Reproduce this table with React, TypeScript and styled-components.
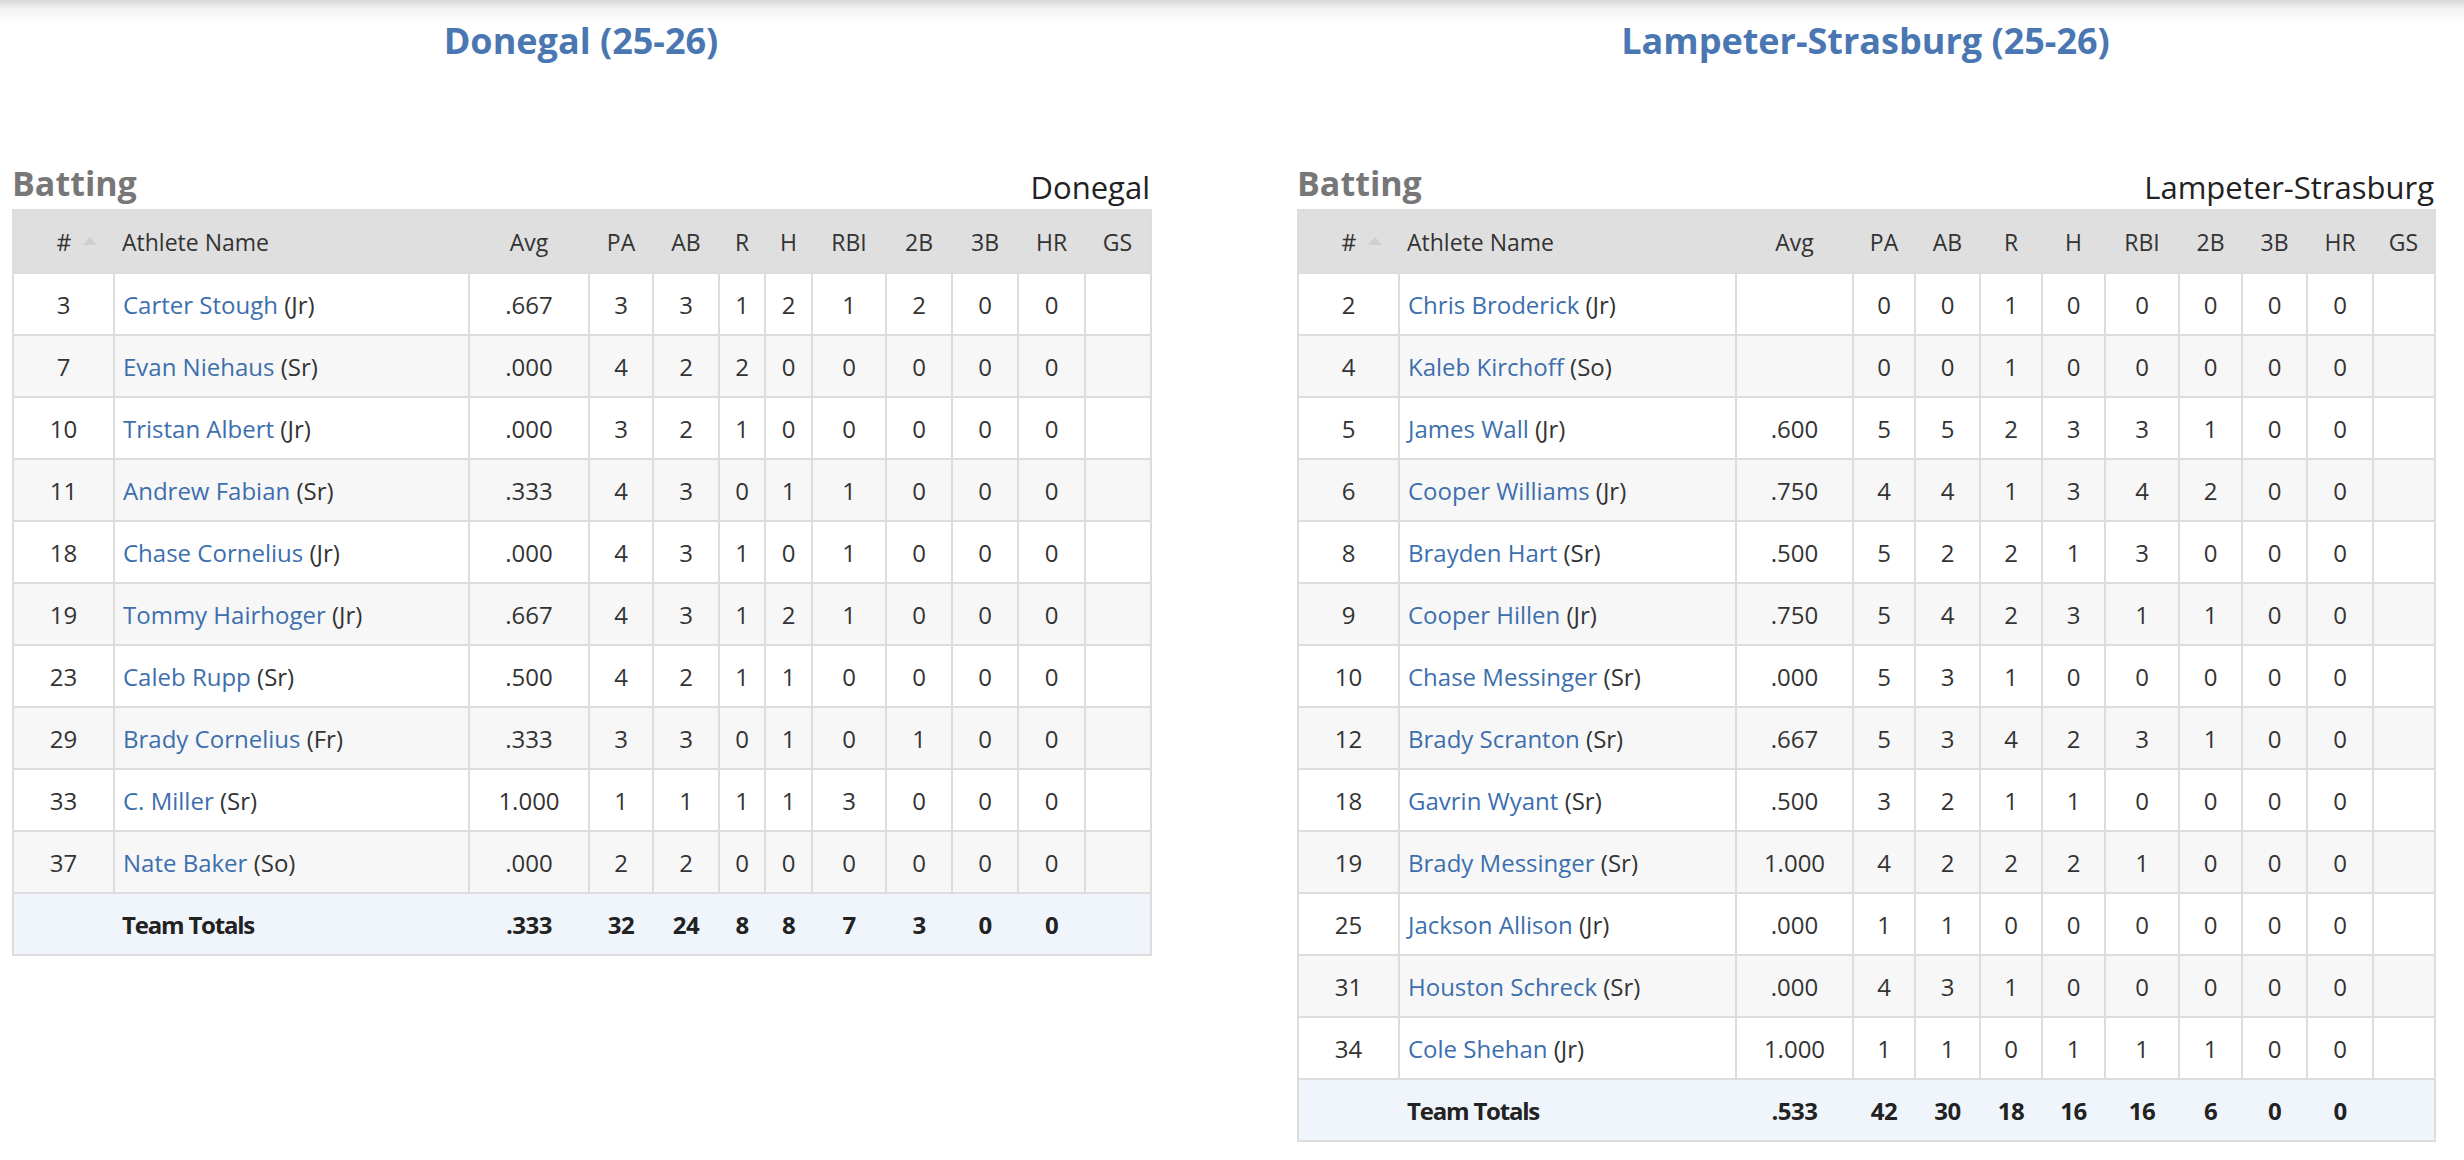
import styled, { createGlobalStyle } from "styled-components";

// Global
const GlobalStyle = createGlobalStyle`
  body {
    margin: 0;
    font-family: "Open Sans", "Noto Sans", sans-serif;
    color: #333;
    background: linear-gradient(to bottom, #d8d8d8 0, #f3f3f3 9px, #ffffff 24px) no-repeat #ffffff;
  }
`;

type Row = {
  num: string;
  name: string;
  cls: string;
  stats: string[];
};

type Team = {
  title: string;
  label: string;
  widths: number[];
  rows: Row[];
  totals: string[];
};

const headers = ["Avg", "PA", "AB", "R", "H", "RBI", "2B", "3B", "HR", "GS"];

const r = (num: string, name: string, cls: string, line: string): Row => ({
  num,
  name,
  cls,
  stats: line.split(",").concat(""),
});

const teams: Team[] = [
  {
    title: "Donegal (25-26)",
    label: "Donegal",
    widths: [101, 355, 120, 64, 66, 46, 47, 74, 66, 66, 67, 66],
    rows: [
      r("3", "Carter Stough", "Jr", ".667,3,3,1,2,1,2,0,0"),
      r("7", "Evan Niehaus", "Sr", ".000,4,2,2,0,0,0,0,0"),
      r("10", "Tristan Albert", "Jr", ".000,3,2,1,0,0,0,0,0"),
      r("11", "Andrew Fabian", "Sr", ".333,4,3,0,1,1,0,0,0"),
      r("18", "Chase Cornelius", "Jr", ".000,4,3,1,0,1,0,0,0"),
      r("19", "Tommy Hairhoger", "Jr", ".667,4,3,1,2,1,0,0,0"),
      r("23", "Caleb Rupp", "Sr", ".500,4,2,1,1,0,0,0,0"),
      r("29", "Brady Cornelius", "Fr", ".333,3,3,0,1,0,1,0,0"),
      r("33", "C. Miller", "Sr", "1.000,1,1,1,1,3,0,0,0"),
      r("37", "Nate Baker", "So", ".000,2,2,0,0,0,0,0,0"),
    ],
    totals: [".333", "32", "24", "8", "8", "7", "3", "0", "0", ""],
  },
  {
    title: "Lampeter-Strasburg (25-26)",
    label: "Lampeter-Strasburg",
    widths: [101, 337, 117, 62, 65, 62, 63, 74, 63, 65, 66, 62],
    rows: [
      r("2", "Chris Broderick", "Jr", ",0,0,1,0,0,0,0,0"),
      r("4", "Kaleb Kirchoff", "So", ",0,0,1,0,0,0,0,0"),
      r("5", "James Wall", "Jr", ".600,5,5,2,3,3,1,0,0"),
      r("6", "Cooper Williams", "Jr", ".750,4,4,1,3,4,2,0,0"),
      r("8", "Brayden Hart", "Sr", ".500,5,2,2,1,3,0,0,0"),
      r("9", "Cooper Hillen", "Jr", ".750,5,4,2,3,1,1,0,0"),
      r("10", "Chase Messinger", "Sr", ".000,5,3,1,0,0,0,0,0"),
      r("12", "Brady Scranton", "Sr", ".667,5,3,4,2,3,1,0,0"),
      r("18", "Gavrin Wyant", "Sr", ".500,3,2,1,1,0,0,0,0"),
      r("19", "Brady Messinger", "Sr", "1.000,4,2,2,2,1,0,0,0"),
      r("25", "Jackson Allison", "Jr", ".000,1,1,0,0,0,0,0,0"),
      r("31", "Houston Schreck", "Sr", ".000,4,3,1,0,0,0,0,0"),
      r("34", "Cole Shehan", "Jr", "1.000,1,1,0,1,1,1,0,0"),
    ],
    totals: [".533", "42", "30", "18", "16", "16", "6", "0", "0", ""],
  },
];

// Styled Components
const Page = styled.main`
  display: grid;
  grid-template-columns: 1138px 1137px;
  column-gap: 147px;
  padding-left: 12px;
  padding-bottom: 40px;
`;

const TeamSection = styled.section`
  display: flex;
  flex-direction: column;
`;

const TeamTitle = styled.h2`
  margin: 17px 0 0;
  height: 48px;
  line-height: 48px;
  text-align: center;
  font-size: 36px;
  font-weight: 700;
  color: #4a77b2;
`;

const HeadingRow = styled.div`
  display: flex;
  justify-content: space-between;
  align-items: flex-end;
  margin-top: 100px;
`;

const SectionName = styled.h3`
  margin: 0 0 8px;
  font-size: 34px;
  line-height: 36px;
  font-weight: 700;
  color: #777;
`;

const TeamLabel = styled.span`
  margin-bottom: 6px;
  font-size: 31px;
  line-height: 32px;
  color: #222;
`;

const Table = styled.table`
  width: 100%;
  table-layout: fixed;
  border-collapse: collapse;
  border: 2px solid #dddddd;
  font-size: 24px;
`;

const Col = styled.col<{ $w: number }>`
  width: ${(p) => p.$w}px;
`;

const HeadCell = styled.th<{ $left?: boolean; $sort?: boolean }>`
  position: relative;
  height: 61px;
  padding: 0 ${(p) => (p.$left ? "8px" : "0")};
  background: #dfdfdf;
  color: #333;
  font-size: 23px;
  font-weight: 400;
  text-align: ${(p) => (p.$left ? "left" : "center")};
  white-space: nowrap;

  ${(p) =>
    p.$sort &&
    `
    &::after {
      content: "";
      position: absolute;
      left: 69px;
      top: 26px;
      border-left: 7px solid transparent;
      border-right: 7px solid transparent;
      border-bottom: 8px solid #cfcfcf;
    }
  `}
`;

const BodyRow = styled.tr`
  background: #ffffff;
  &:nth-child(even) {
    background: #f7f7f7;
  }
`;

const Cell = styled.td<{ $left?: boolean }>`
  height: 60px;
  padding: 0 ${(p) => (p.$left ? "8px" : "0")};
  border: 2px solid #dddddd;
  text-align: ${(p) => (p.$left ? "left" : "center")};
  white-space: nowrap;
  color: #333;
`;

const PlayerLink = styled.a`
  color: #3d6fae;
  text-decoration: none;
`;

const TotalsRow = styled.tr`
  background: #f0f5fc;
  border-top: 2px solid #dddddd;
`;

const TotalCell = styled.td<{ $label?: boolean }>`
  height: 60px;
  padding: 0 ${(p) => (p.$label ? "8px" : "0")};
  text-align: ${(p) => (p.$label ? "left" : "center")};
  letter-spacing: ${(p) => (p.$label ? "-1.2px" : "-0.5px")};
  font-weight: 700;
  color: #222;
  white-space: nowrap;
`;

const BattingTable = ({ team }: { team: Team }) => (
  <Table>
    <colgroup>
      {team.widths.map((w, i) => (
        <Col key={i} $w={w} />
      ))}
    </colgroup>
    <thead>
      <tr>
        <HeadCell $sort>#</HeadCell>
        <HeadCell $left>Athlete Name</HeadCell>
        {headers.map((h) => (
          <HeadCell key={h}>{h}</HeadCell>
        ))}
      </tr>
    </thead>
    <tbody>
      {team.rows.map((row) => (
        <BodyRow key={row.num}>
          <Cell>{row.num}</Cell>
          <Cell $left>
            <PlayerLink href="#">{row.name}</PlayerLink> ({row.cls})
          </Cell>
          {row.stats.map((s, i) => (
            <Cell key={i}>{s}</Cell>
          ))}
        </BodyRow>
      ))}
      <TotalsRow>
        <TotalCell />
        <TotalCell $label>Team Totals</TotalCell>
        {team.totals.map((s, i) => (
          <TotalCell key={i}>{s}</TotalCell>
        ))}
      </TotalsRow>
    </tbody>
  </Table>
);

const App = () => {
  return (
    <>
      <GlobalStyle />
      <Page>
        {teams.map((team) => (
          <TeamSection key={team.label}>
            <TeamTitle>{team.title}</TeamTitle>
            <HeadingRow>
              <SectionName>Batting</SectionName>
              <TeamLabel>{team.label}</TeamLabel>
            </HeadingRow>
            <BattingTable team={team} />
          </TeamSection>
        ))}
      </Page>
    </>
  );
};

export default App;
